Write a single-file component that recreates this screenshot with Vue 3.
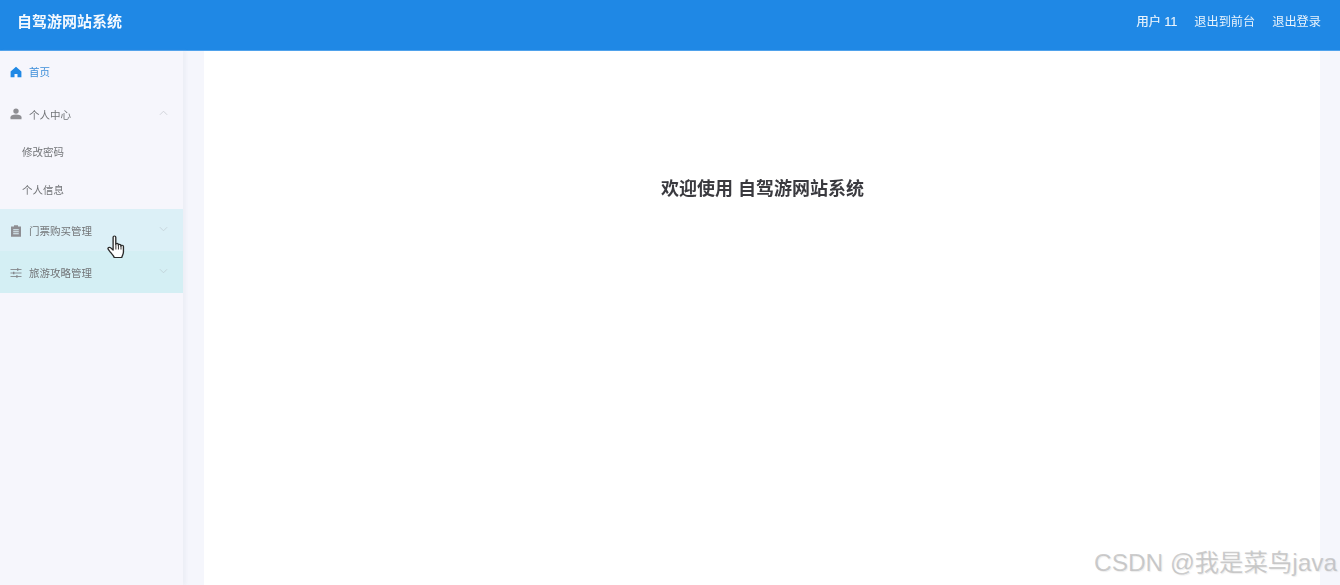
<script setup>
</script>

<template>
  <div class="app">
    <header class="topbar">
      <div class="brand">自驾游网站系统</div>
      <nav class="top-links">
        <span class="user">用户 11</span>
        <span>退出到前台</span>
        <span>退出登录</span>
      </nav>
    </header>
    <div class="body">
      <aside class="sidebar">
        <div class="item home">
          <svg class="ico" viewBox="0 0 12 12"><path fill="#1f88e5" d="M6 .8 .6 5.6V11.2h3.9V8h3v3.2h3.9V5.6z"/></svg>
          <span>首页</span>
        </div>
        <div class="item group first-group">
          <svg class="ico" viewBox="0 0 12 12"><circle cx="6" cy="3.1" r="2.7" fill="#8e8e93"/><path fill="#8e8e93" d="M.5 11.2V9.2C.5 7.4 2.6 6.5 6 6.5s5.500.9 5.500 2.700v2z"/></svg>
          <span>个人中心</span>
          <svg class="chev" viewBox="0 0 10 6"><path d="M1 5l4-4 4 4" fill="none" stroke="#c9ccd2" stroke-width=".9"/></svg>
        </div>
        <div class="sub">修改密码</div>
        <div class="sub">个人信息</div>
        <div class="item group tint-a">
          <svg class="ico shifted" viewBox="0 0 12 12"><path fill="#8e8e93" fill-rule="evenodd" d="M4 .3h4v1.200h3v10.200H1V1.500h3zM3.200 4.300v1h5.600v-1zM3.200 6.300v1h5.600v-1zM3.200 8.300v1h5.600v-1z"/></svg>
          <span>门票购买管理</span>
          <svg class="chev" viewBox="0 0 10 6"><path d="M1 1l4 4 4-4" fill="none" stroke="#c3d0d6" stroke-width=".9"/></svg>
        </div>
        <div class="item group tint-b">
          <svg class="ico shifted" viewBox="0 0 12 12"><path fill="none" stroke="#85888c" stroke-width=".9" d="M.5 2.500h11M.5 6h11M.5 9.500h11"/><path fill="#85888c" d="M7 1.300h1.400v2.400H7zM3 4.800h1.400v2.400H3zM6.200 8.300h1.400v2.400H6.200z"/></svg>
          <span>旅游攻略管理</span>
          <svg class="chev" viewBox="0 0 10 6"><path d="M1 1l4 4 4-4" fill="none" stroke="#bfcfd5" stroke-width=".9"/></svg>
        </div>
      </aside>
      <main class="content">
        <div class="panel">
          <h1>欢迎使用 自驾游网站系统</h1>
        </div>
      </main>
    </div>
    <svg class="cursor" viewBox="0 0 18 25" preserveAspectRatio="none" aria-hidden="true">
      <path fill="#fff" stroke="#2a2a2a" stroke-width="1.200" stroke-linejoin="round" d="M5.500 2.200c0-1.600 2.400-1.600 2.400 0v7.300c0-1.400 2.300-1.400 2.300 0v.8c0-1.300 2.300-1.300 2.300.1v.7c0-1.200 2.300-1.100 2.300.3v5.600c0 2.500-1.200 3.300-1.500 5.500H6.500c-.5-1.900-1.900-3.200-3.500-5.300L1.200 14.400c-1-1.500.9-2.900 2.200-1.500l2.100 2.200z"/>
      <path fill="none" stroke="#2a2a2a" stroke-width=".9" d="M8 10v4.500M10.300 10.500v4M12.600 11v3.500"/>
    </svg>
    <div class="watermark">CSDN @我是菜鸟java</div>
  </div>
</template>

<style>
html, body { margin: 0; padding: 0; overflow: hidden; }
</style>

<style scoped>
.app {
  position: relative;
  width: 1340px;
  height: 585px;
  overflow: hidden;
  background: #f5f6fc;
  font-family: "Liberation Sans", "Noto Sans CJK SC", sans-serif;
}
.topbar {
  height: 51px;
  box-sizing: border-box;
  background: #1f88e5;
  border-bottom: 1px solid #4fa2ec;
  display: flex;
  align-items: center;
  justify-content: space-between;
  padding: 0 19px 0 17px;
  color: #fff;
}
.brand { font-size: 15px; font-weight: 700; color: #f4f9fe; padding-bottom: 10px; filter: blur(0.3px); }
.top-links { display: flex; gap: 17px; font-size: 12.200px; color: #e9f3fc; padding-bottom: 8px; filter: blur(0.3px); }
.user { letter-spacing: 0.1px; -webkit-text-stroke: 0.2px #e9f3fc; }
.body { display: flex; height: 534px; }
.sidebar {
  width: 183px;
  flex: none;
  background: #f6f6fc;
  box-shadow: 3px 0 3px rgba(190, 195, 215, 0.14);
  font-size: 10.500px;
  color: #727477;
}
.item {
  display: flex;
  align-items: center;
  padding: 0 15px 0 10px;
  height: 42px;
}
.item > span { padding-top: 1px; filter: blur(0.3px); }
.item.home { color: #3f8fd9; }
.item.home > span { padding-top: 0; padding-bottom: 1px; }
.item.first-group { height: 40px; padding-top: 1px; box-sizing: border-box; }
.ico { width: 12px; height: 12px; margin-right: 7px; flex: none; }
.ico.shifted { margin-top: 2px; }
.chev { width: 9px; height: 6px; margin-left: auto; margin-bottom: 2px; }
.sub { height: 38px; line-height: 38px; padding-left: 22px; filter: blur(0.3px); }
.tint-a { background: #dcf0f7; }
.tint-b { background: #d4eff4; }
.content { flex: 1; padding: 0 20px 0 21px; min-width: 0; }
.panel { background: #fff; height: 534px; padding-top: 126px; box-sizing: border-box; }
h1 {
  margin: 0;
  text-align: center;
  font-size: 18px;
  line-height: 24px;
  font-weight: 700;
  color: #3a3a3f;
  transform: translateX(0.5px);
  filter: blur(0.3px);
}
.cursor {
  position: absolute;
  left: 107px;
  top: 235px;
  width: 20px;
  height: 25px;
}
.watermark {
  position: absolute;
  right: 3px;
  top: 547px;
  font-size: 24.400px;
  line-height: 32px;
  color: rgba(165, 165, 165, 0.55);
  text-shadow: 1px 1px 1px rgba(200, 200, 200, 0.35);
  white-space: nowrap;
}
</style>
